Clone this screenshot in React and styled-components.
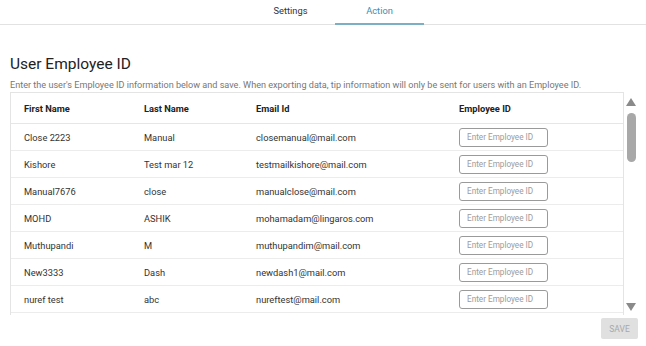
import React from 'react';
import styled, { createGlobalStyle } from 'styled-components';

const GlobalStyle = createGlobalStyle`
    html, body {
        margin: 0;
        padding: 0;
        background: #fff;
        font-family: Roboto, "Noto Sans", sans-serif;
        color: #333;
    }
`;

const rows = [
    ['Close 2223', 'Manual', 'closemanual@mail.com'],
    ['Kishore', 'Test mar 12', 'testmailkishore@mail.com'],
    ['Manual7676', 'close', 'manualclose@mail.com'],
    ['MOHD', 'ASHIK', 'mohamadam@lingaros.com'],
    ['Muthupandi', 'M', 'muthupandim@mail.com'],
    ['New3333', 'Dash', 'newdash1@mail.com'],
    ['nuref test', 'abc', 'nureftest@mail.com'],
];

const App = () => {
    return (
        <Page>
            <GlobalStyle />
            <TabBar>
                <Tab>Settings</Tab>
                <Tab active>Action</Tab>
            </TabBar>
            <Content>
                <Title>User Employee ID</Title>
                <Hint>
                    Enter the user's Employee ID information below and save. When exporting data, tip information will only be sent for users with an Employee ID.
                </Hint>
                <TableArea>
                    <TableBox>
                        <HeadRow>
                            <Cell>First Name</Cell>
                            <Cell>Last Name</Cell>
                            <Cell>Email Id</Cell>
                            <Cell>Employee ID</Cell>
                        </HeadRow>
                        {rows.map((row, i) => (
                            <Row key={i}>
                                <Cell>{row[0]}</Cell>
                                <Cell>{row[1]}</Cell>
                                <Cell>{row[2]}</Cell>
                                <Cell>
                                    <IdInput placeholder="Enter Employee ID" />
                                </Cell>
                            </Row>
                        ))}
                    </TableBox>
                    <Scrollbar>
                        <Arrow viewBox="0 0 10 8">
                            <path d="M5 0 L10 8 L0 8 Z" fill="#8a8a8a" />
                        </Arrow>
                        <Track>
                            <Thumb />
                        </Track>
                        <Arrow viewBox="0 0 10 8">
                            <path d="M0 0 L10 0 L5 8 Z" fill="#8a8a8a" />
                        </Arrow>
                    </Scrollbar>
                </TableArea>
                <Footer>
                    <SaveButton disabled>SAVE</SaveButton>
                </Footer>
            </Content>
        </Page>
    );
};

const Page = styled.div`
    width: 646px;
    height: 346px;
    overflow: hidden;
`;

const TabBar = styled.div`
    display: flex;
    padding-left: 246px;
    height: 24px;
    border-bottom: 1px solid #e2e2e2;
`;

const Tab = styled.div`
    width: 89px;
    box-sizing: border-box;
    padding-top: 5px;
    text-align: center;
    font-size: 9.3px;
    color: ${(p) => (p.active ? '#3d8db0' : '#333')};
    border-bottom: 2px solid ${(p) => (p.active ? '#7aafc6' : 'transparent')};
    margin-bottom: -1px;
`;

const Content = styled.div`
    padding: 0 8px 0 10px;
`;

const Title = styled.h1`
    margin: 30px 0 0;
    font-size: 15.5px;
    font-weight: 400;
    line-height: 18px;
    color: #222;
`;

const Hint = styled.p`
    margin: 6px 0 0;
    font-size: 9.1px;
    line-height: 12px;
    color: #777;
    white-space: nowrap;
`;

const TableArea = styled.div`
    display: flex;
    margin-top: 1px;
    height: 223px;
`;

const TableBox = styled.div`
    flex: 1;
    border: 1px solid #e4e4e4;
    border-bottom: none;
    overflow: hidden;
`;

const HeadRow = styled.div`
    display: grid;
    grid-template-columns: 120px 112px 203px 1fr;
    height: 30px;
    align-items: center;
    padding-left: 13px;
    border-bottom: 1px solid #e6e6e6;
    font-size: 9.3px;
    font-weight: 700;
    color: #222;
`;

const Row = styled.div`
    display: grid;
    grid-template-columns: 120px 112px 203px 1fr;
    height: 26px;
    align-items: center;
    padding-left: 13px;
    border-bottom: 1px solid #ececec;
    font-size: 9.3px;
    color: #333;
`;

const Cell = styled.div`
    white-space: nowrap;
`;

const IdInput = styled.input`
    box-sizing: border-box;
    width: 89px;
    height: 19px;
    border: 1px solid #9a9a9a;
    border-radius: 3px;
    padding: 0 7px;
    font-family: Roboto, sans-serif;
    font-size: 8.2px;
    color: #333;
    outline: none;
    &::placeholder {
        color: #9b9b9b;
    }
`;

const Scrollbar = styled.div`
    width: 14px;
    display: flex;
    flex-direction: column;
    align-items: center;
    padding: 6px 0 4px;
    box-sizing: border-box;
`;

const Arrow = styled.svg`
    width: 10px;
    height: 8px;
    flex: none;
`;

const Track = styled.div`
    flex: 1;
    width: 100%;
    display: flex;
    justify-content: center;
    padding-top: 7px;
`;

const Thumb = styled.div`
    width: 9px;
    height: 49px;
    border-radius: 4.5px;
    background: #a8a8a8;
`;

const Footer = styled.div`
    display: flex;
    justify-content: flex-end;
    padding: 3px 0 0;
`;

const SaveButton = styled.button`
    width: 37px;
    height: 21px;
    border: none;
    border-radius: 2px;
    background: #e0e0e0;
    color: #a8a8a8;
    font-family: Roboto, sans-serif;
    font-size: 8.5px;
    padding: 0;
`;

export default App;
